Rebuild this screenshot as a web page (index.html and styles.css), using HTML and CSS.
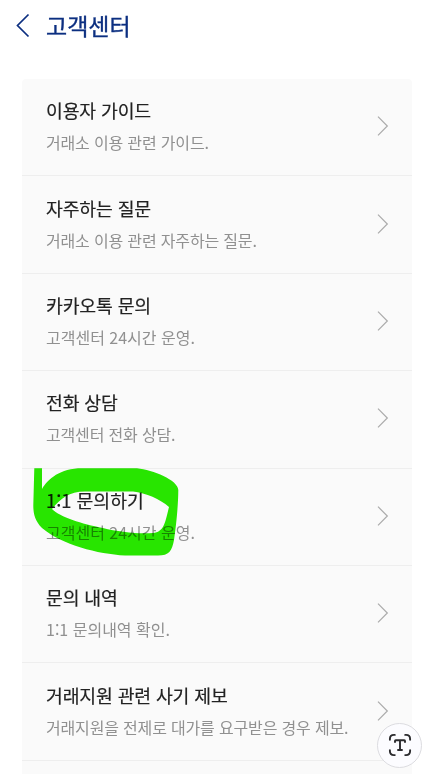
FILE: index.html
```html
<!DOCTYPE html>
<html lang="ko">

<head>
    <meta charset="UTF-8">
    <meta name="viewport" content="width=device-width, initial-scale=1.0">
    <title>고객센터</title>
    <link rel="stylesheet" href="styles.css">
</head>

<body>
    <header class="top-bar">
        <svg class="back" viewBox="0 0 14 24"><path d="M12.500 1.500 1.500 12.500l11 11" /></svg>
        <h1>고객센터</h1>
    </header>

    <main class="menu">
        <a class="item">
            <div>
                <h2>이용자 가이드</h2>
                <p>거래소 이용 관련 가이드.</p>
            </div>
            <svg class="arrow" viewBox="0 0 12 20"><path d="M1 .7 10.3 10 1 19.3" /></svg>
        </a>
        <a class="item">
            <div>
                <h2>자주하는 질문</h2>
                <p>거래소 이용 관련 자주하는 질문.</p>
            </div>
            <svg class="arrow" viewBox="0 0 12 20"><path d="M1 .7 10.3 10 1 19.3" /></svg>
        </a>
        <a class="item">
            <div>
                <h2>카카오톡 문의</h2>
                <p class="wide">고객센터 24시간 운영.</p>
            </div>
            <svg class="arrow" viewBox="0 0 12 20"><path d="M1 .7 10.3 10 1 19.3" /></svg>
        </a>
        <a class="item">
            <div>
                <h2>전화 상담</h2>
                <p>고객센터 전화 상담.</p>
            </div>
            <svg class="arrow" viewBox="0 0 12 20"><path d="M1 .7 10.3 10 1 19.3" /></svg>
        </a>
        <a class="item">
            <div>
                <h2 class="wide">1:1 문의하기</h2>
                <p class="wide">고객센터 24시간 운영.</p>
            </div>
            <svg class="arrow" viewBox="0 0 12 20"><path d="M1 .7 10.3 10 1 19.3" /></svg>
            <svg class="marker" viewBox="32 466 150 92">
                <path fill-rule="evenodd" d="M34.300 468.300H42V489C48 479 60 468.300 82 468.300H137C153 470 178 480 178.300 490C178.300 505 176 527 174 540C172 551 169 555.500 158 555.500H125C98 554 62 545 42 528C34 520 33.300 512 33.300 505ZM52 509C61 498 69 491.500 85 491.500H133C146 493 160 499 169 507C165 523 164 532 153 533C138 534 118 532 103 528C82 524 60 517 52 509Z" />
            </svg>
        </a>
        <a class="item">
            <div>
                <h2>문의 내역</h2>
                <p class="wide">1:1 문의내역 확인.</p>
            </div>
            <svg class="arrow" viewBox="0 0 12 20"><path d="M1 .7 10.3 10 1 19.3" /></svg>
        </a>
        <a class="item">
            <div>
                <h2>거래지원 관련 사기 제보</h2>
                <p>거래지원을 전제로 대가를 요구받은 경우 제보.</p>
            </div>
            <svg class="arrow" viewBox="0 0 12 20"><path d="M1 .7 10.3 10 1 19.3" /></svg>
        </a>
    </main>

    <button class="scan">
        <svg viewBox="0 0 24 24">
            <path d="M1.900 6.800V6Q1.900 1.900 6 1.900H6.800M17.200 1.900H18Q22.100 1.900 22.100 6V6.800M22.100 17.200V18Q22.100 22.100 18 22.100H17.200M6.800 22.100H6Q1.900 22.100 1.900 18V17.200" />
            <path d="M7 9V8Q7 7.300 7.700 7.300H16.300Q17 7.300 17 8V9M12 7.300V17M10 17H14" />
        </svg>
    </button>
</body>

</html>
```

FILE: styles.css
```css
* {
    box-sizing: border-box;
}

body {
    margin: 0;
    height: 774px;
    overflow: hidden;
    background: #fff;
    font-family: 'Noto Sans CJK KR', sans-serif;
}

h1,
h2,
p {
    margin: 0;
    font-weight: 400;
    white-space: nowrap;
}

.top-bar {
    display: flex;
    align-items: center;
    gap: 16px;
    height: 79px;
    padding: 0 0 30px 16px;
}

.top-bar h1 {
    color: #0c2f80;
    font-size: 23px;
    line-height: 34px;
    -webkit-text-stroke: 0.35px #0c2f80;
}

.back {
    width: 14px;
    height: 24px;
    overflow: visible;
    fill: none;
    stroke: #0c2f80;
    stroke-width: 1.7;
}

.menu {
    height: 695px;
    margin: 0 20px 0 22px;
    border-radius: 4px 4px 0 0;
    background: #fafafa;
}

.item {
    position: relative;
    display: flex;
    align-items: center;
    justify-content: space-between;
    height: 97.4px;
    padding: 0 23px 2px 24px;
    border-bottom: 1.5px solid #eee;
}

.item h2 {
    color: #222;
    font-size: 18.3px;
    line-height: 32px;
    letter-spacing: -0.15px;
    -webkit-text-stroke: 0.2px #222;
}

.item p {
    color: #909090;
    font-size: 16px;
    line-height: 32px;
    letter-spacing: -0.17px;
}

.item .wide {
    letter-spacing: 0;
}

.arrow {
    flex: none;
    width: 12px;
    height: 20px;
    fill: none;
    stroke: #aaa;
    stroke-width: 1.2;
}

/* highlighter stroke, text stays readable through it */
.marker {
    position: absolute;
    top: -3px;
    left: 10px;
    width: 150px;
    height: 92px;
    fill: #28ea00;
    mix-blend-mode: multiply;
}

.scan {
    position: absolute;
    top: 723px;
    left: 377px;
    display: flex;
    align-items: center;
    justify-content: center;
    width: 45px;
    height: 45px;
    padding: 0 0 1px;
    border: 1px solid #dcdce0;
    border-radius: 50%;
    background: #fcfcff;
}

.scan svg {
    width: 24px;
    height: 24px;
    fill: none;
    stroke: #2b2b2e;
    stroke-width: 1.9;
    stroke-linecap: round;
}
```
